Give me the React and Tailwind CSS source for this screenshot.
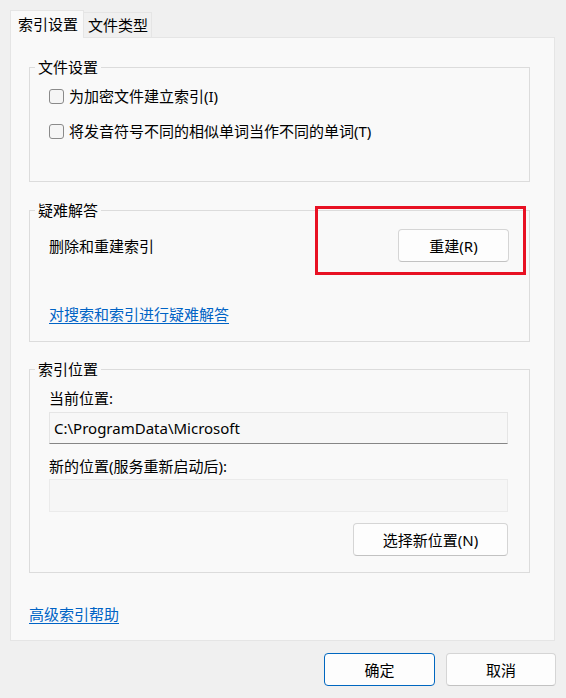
import React from 'react';

const Checkbox = ({ label }) => (
  <label className="flex items-center h-5 gap-[5px]">
    <span className="w-[15px] h-[15px] rounded-[3px] border border-[#8a8a8a] bg-[#f5f5f5] shrink-0" />
    <span>{label}</span>
  </label>
);

const Button = ({ children, className = '' }) => (
  <button
    className={`h-[33px] rounded-[4px] bg-[#fdfdfd] border border-[#d5d5d5] border-b-[#c2c2c2] text-[15px] leading-5 text-black ${className}`}
  >
    {children}
  </button>
);

const Group = ({ title, className = '', children }) => (
  <fieldset className={`border border-[#dcdcdc] w-[501px] ${className}`}>
    <legend className="ml-[5px] px-[3px] leading-5">{title}</legend>
    {children}
  </fieldset>
);

export default function App() {
  return (
    <div className="relative w-[566px] h-[698px] bg-[#f0f0f0] pt-[10px] px-[10px] text-[15px] leading-5 text-black font-['Noto_Sans','Noto_Sans_CJK_SC',sans-serif] overflow-hidden">
      {/* Tabs */}
      <div className="relative z-10 flex h-[27px]">
        <div className="h-[28px] w-[74px] pl-[7px] pt-[3px] bg-[#f9f9f9] border border-b-0 border-[#e5e5e5] self-start">
          索引设置
        </div>
        <div className="h-[25px] w-[68px] pl-[4px] pt-[2px] bg-[#f0f0f0] border border-l-0 border-b-0 border-[#e5e5e5] self-end">
          文件类型
        </div>
      </div>

      {/* Panel */}
      <div className="w-[545px] bg-[#f9f9f9] border border-[#e5e5e5] pl-[18px] pt-[19px] pb-[16px]">
        <Group title="文件设置">
          <div className="flex flex-col gap-[15px] pt-[9px] pb-[40px] px-[19px]">
            <Checkbox label="为加密文件建立索引(I)" />
            <Checkbox label="将发音符号不同的相似单词当作不同的单词(T)" />
          </div>
        </Group>

        <Group title="疑难解答" className="mt-[18px]">
          <div className="pt-[9px] pb-[17px] pl-[19px] pr-[20px]">
            <div className="flex items-center justify-between">
              <span>删除和重建索引</span>
              <Button className="w-[111px]">重建(R)</Button>
            </div>
            <a href="#" className="block mt-[42px] w-fit text-[#0063c5] underline underline-offset-[3px]">
              对搜索和索引进行疑难解答
            </a>
          </div>
        </Group>

        <Group title="索引位置" className="mt-[17px]">
          <div className="flex flex-col pt-[9px] pb-[16px] pl-[19px] pr-[21px]">
            <span>当前位置:</span>
            <div className="mt-[4px] h-[32px] px-[4px] flex items-center bg-[#f7f7f7] border border-[#e5e5e5] border-b-[#868686]">
              C:\ProgramData\Microsoft
            </div>
            <span className="mt-[12px]">新的位置(服务重新启动后):</span>
            <div className="mt-[3px] h-[33px] bg-[#f6f6f6] border border-[#ebebeb]" />
            <div className="mt-[11px] flex justify-end">
              <Button className="w-[155px]">选择新位置(N)</Button>
            </div>
          </div>
        </Group>

        <a href="#" className="block mt-[31px] w-fit text-[#0063c5] underline underline-offset-[3px]">
          高级索引帮助
        </a>
      </div>

      {/* Dialog buttons */}
      <div className="flex justify-end gap-[11px] mt-[12px]">
        <button className="h-[33px] w-[111px] rounded-[4px] bg-[#fdfdfd] border border-[#0067c0] text-[15px] leading-5 text-black">
          确定
        </button>
        <button className="h-[33px] w-[110px] rounded-[4px] bg-[#fdfdfd] border border-[#d5d5d5] border-b-[#c2c2c2] text-[15px] leading-5 text-black">
          取消
        </button>
      </div>

      {/* Annotation highlight */}
      <div className="absolute left-[315px] top-[206px] w-[211px] h-[69px] border-[3px] border-[#e81123] pointer-events-none" />
    </div>
  );
}
